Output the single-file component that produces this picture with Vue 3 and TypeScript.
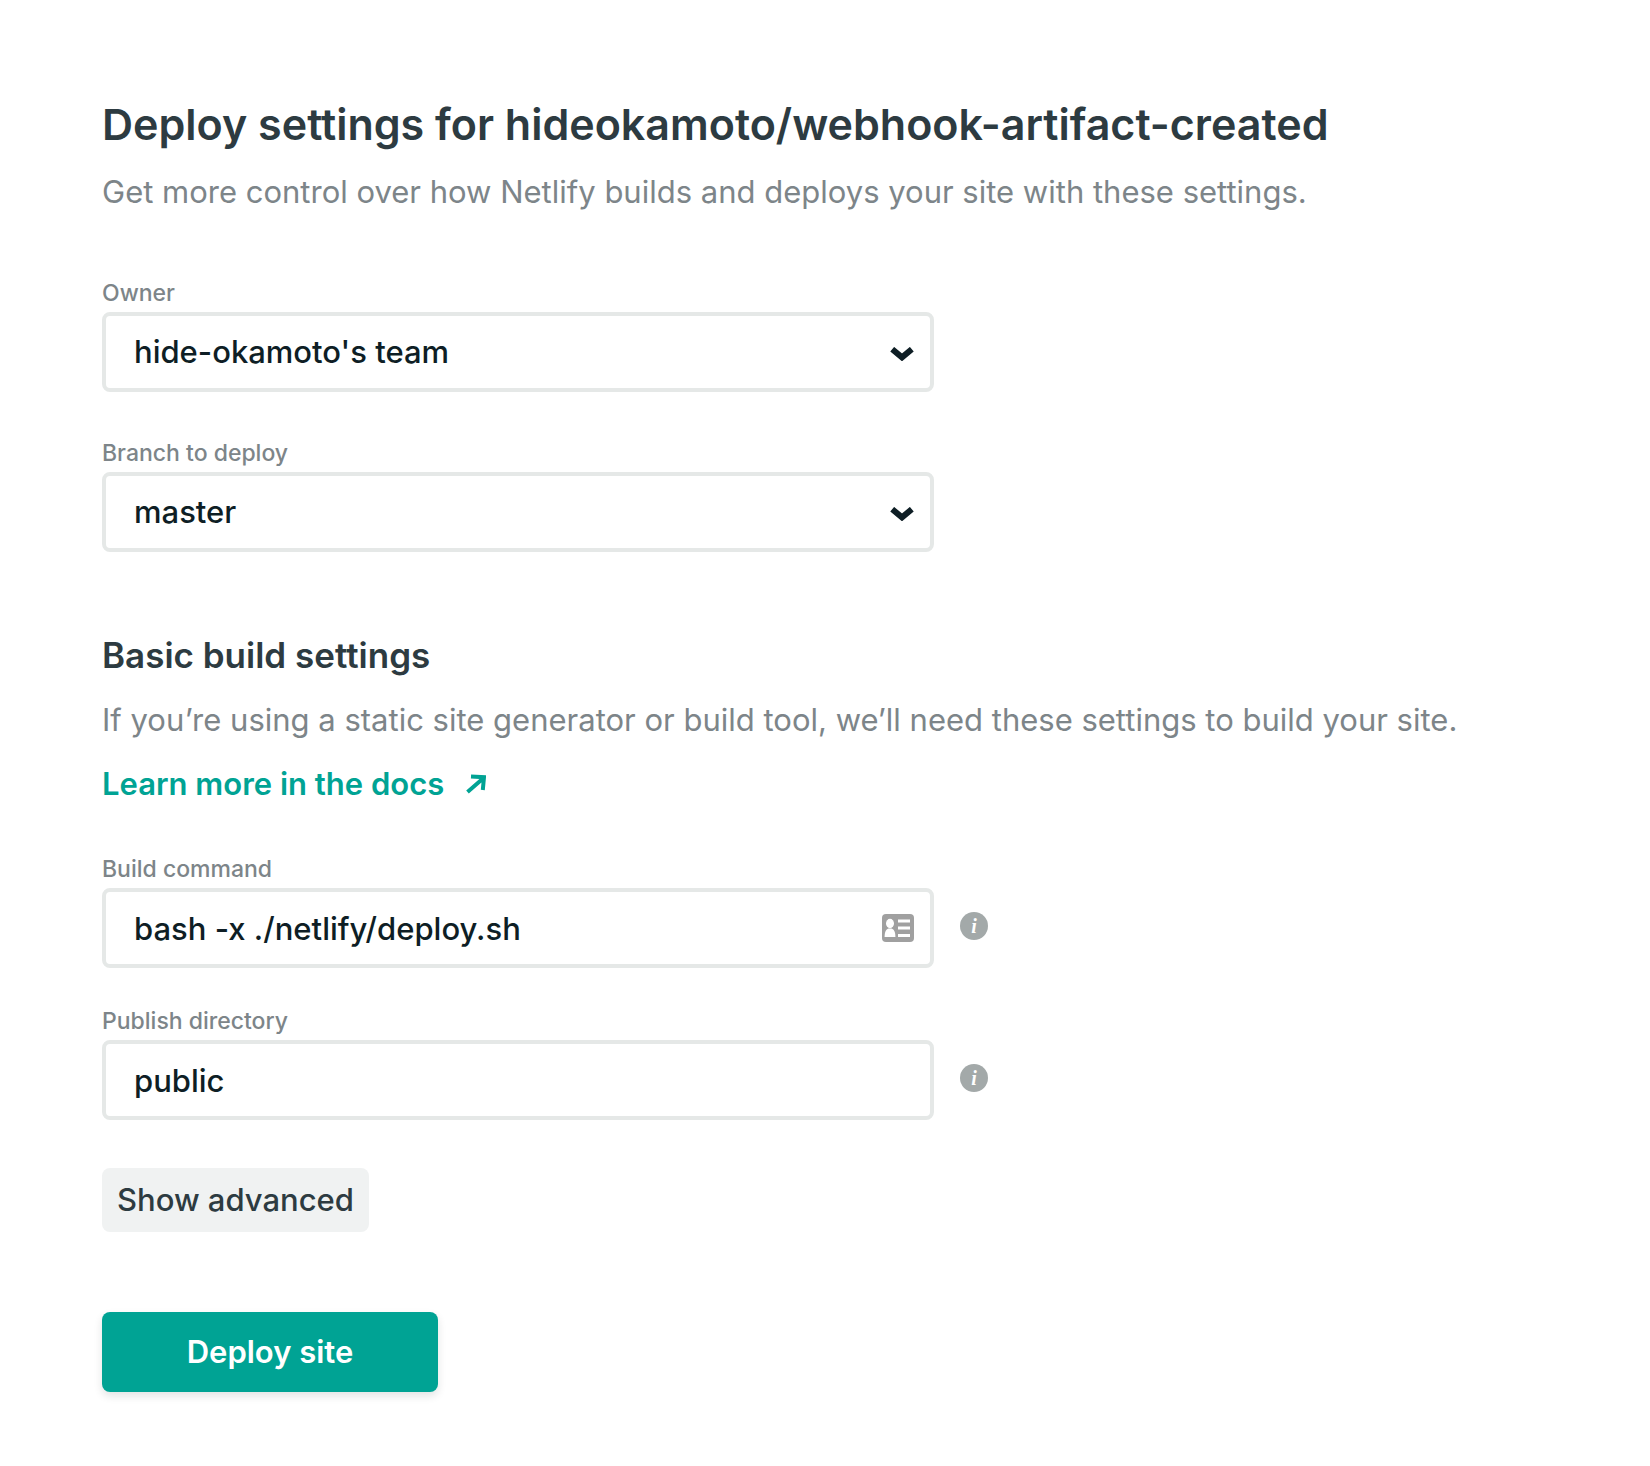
<script setup lang="ts">
import { ref } from 'vue'

const owners: string[] = ["hide-okamoto's team"]
const branches: string[] = ['master']

const owner = ref<string>(owners[0])
const branch = ref<string>(branches[0])
const buildCommand = ref<string>('bash -x ./netlify/deploy.sh')
const publishDirectory = ref<string>('public')
</script>

<template>
  <main class="page">
    <header class="intro">
      <h1>Deploy settings for hideokamoto/webhook-artifact-created</h1>
      <p>Get more control over how Netlify builds and deploys your site with these settings.</p>
    </header>

    <form @submit.prevent>
      <section class="source">
        <div class="field">
          <label for="owner">Owner</label>
          <div class="control">
            <select id="owner" v-model="owner">
              <option v-for="o in owners" :key="o">{{ o }}</option>
            </select>
            <svg class="chevron" viewBox="0 0 24 14" aria-hidden="true">
              <path d="M2.200 2.200 12 10.400 21.800 2.200" />
            </svg>
          </div>
        </div>
        <div class="field">
          <label for="branch">Branch to deploy</label>
          <div class="control">
            <select id="branch" v-model="branch">
              <option v-for="b in branches" :key="b">{{ b }}</option>
            </select>
            <svg class="chevron" viewBox="0 0 24 14" aria-hidden="true">
              <path d="M2.200 2.200 12 10.400 21.800 2.200" />
            </svg>
          </div>
        </div>
      </section>

      <section class="build">
        <h2>Basic build settings</h2>
        <p>If you’re using a static site generator or build tool, we’ll need these settings to build your site.</p>
        <a class="docs" href="#docs">
          Learn more in the docs
          <svg viewBox="0 0 20 20" aria-hidden="true">
            <path d="M1.5 18 17 4.5M5 2.6 18 3.2 16.8 16" />
          </svg>
        </a>

        <div class="fields">
          <div class="field">
            <label for="command">Build command</label>
            <div class="row">
              <div class="control">
                <input id="command" v-model="buildCommand" type="text" />
                <svg class="card" viewBox="0 0 32 28" aria-hidden="true">
                  <rect width="32" height="28" rx="4" fill="#a0a0a0" />
                  <ellipse cx="8" cy="9.5" rx="4" ry="4.7" fill="#fff" />
                  <path d="M2.6 23c0-5 1.4-7.6 3.7-8.4h3.4c2.3.8 3.7 3.4 3.7 8.4z" fill="#fff" />
                  <path d="M16 7h12M16 14h12M16 21.5h12" stroke="#fff" stroke-width="3" />
                </svg>
              </div>
              <button type="button" class="info" aria-label="About the build command">i</button>
            </div>
          </div>
          <div class="field">
            <label for="directory">Publish directory</label>
            <div class="row">
              <div class="control">
                <input id="directory" v-model="publishDirectory" type="text" />
              </div>
              <button type="button" class="info" aria-label="About the publish directory">i</button>
            </div>
          </div>
        </div>
      </section>

      <div class="actions">
        <button type="button" class="advanced">Show advanced</button>
        <button type="submit" class="deploy">Deploy site</button>
      </div>
    </form>
  </main>
</template>

<style>
body {
  background: #fff;
}
</style>

<style scoped>
.page {
  box-sizing: border-box;
  padding: 96px 102px 72px;
  font-family: Inter, "Liberation Sans", sans-serif;
  font-size: 31px;
  line-height: 48px;
  color: #2d3b41;
}
h1,
h2,
p {
  margin: 0;
}
h1 {
  font-size: 43px;
  line-height: 56px;
  font-weight: 600;
}
h2 {
  font-size: 35px;
  line-height: 46px;
  font-weight: 600;
}
p {
  margin-top: 16px;
  color: #7d8589;
}
h2 + p {
  margin-top: 18px;
}
.source {
  display: flex;
  flex-direction: column;
  gap: 44px;
  margin-top: 60px;
}
.build {
  margin-top: 80px;
}
.docs {
  display: flex;
  align-items: center;
  gap: 22px;
  width: fit-content;
  margin-top: 16px;
  color: #00a394;
  font-weight: 600;
  text-decoration: none;
}
.docs svg {
  width: 20px;
  height: 20px;
  fill: none;
  stroke: currentColor;
  stroke-width: 4;
}
.fields {
  display: flex;
  flex-direction: column;
  gap: 36px;
  margin-top: 44px;
}
label {
  display: block;
  margin-bottom: 2px;
  font-size: 23px;
  line-height: 34px;
  font-weight: 500;
  color: #7d8589;
}
.row {
  display: flex;
  align-items: center;
  gap: 26px;
}
.control {
  position: relative;
  flex: 0 1 832px;
  max-width: 832px;
}
select,
input {
  appearance: none;
  display: block;
  box-sizing: border-box;
  width: 100%;
  height: 80px;
  margin: 0;
  padding: 0 28px;
  border: 4px solid #e5e8e7;
  border-radius: 8px;
  background: #fff;
  color: #0e1e25;
  font: inherit;
  font-weight: 500;
}
.chevron {
  position: absolute;
  right: 20px;
  top: 35px;
  width: 24px;
  height: 14px;
  fill: none;
  stroke: #0e1e25;
  stroke-width: 6;
  pointer-events: none;
}
.card {
  position: absolute;
  right: 20px;
  top: 26px;
  width: 32px;
  height: 28px;
}
.info {
  width: 28px;
  height: 28px;
  margin-bottom: 4px;
  padding: 0;
  border: 0;
  border-radius: 50%;
  background: #a3a9a9;
  color: #fff;
  font: italic bold 20px/28px "Liberation Serif", serif;
}
.actions {
  display: flex;
  flex-direction: column;
  align-items: flex-start;
  gap: 80px;
  margin-top: 48px;
}
.advanced,
.deploy {
  border: 0;
  border-radius: 8px;
  font: inherit;
}
.advanced {
  height: 64px;
  padding: 0 15px;
  background: #f0f2f2;
  color: #2d3b41;
  font-weight: 500;
}
.deploy {
  width: 336px;
  height: 80px;
  background: #00a394;
  color: #fff;
  font-weight: 600;
  box-shadow: 0 4px 8px rgba(14, 30, 37, 0.12);
}
</style>
